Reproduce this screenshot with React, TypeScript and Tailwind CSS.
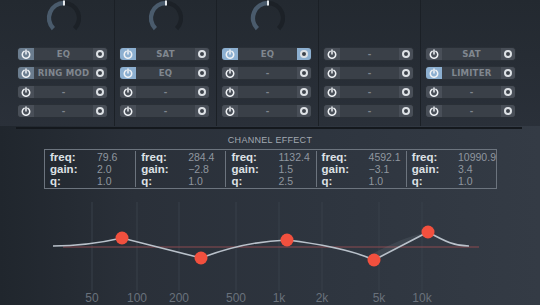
import React from 'react';

type Slot = {
  label: string;
  power?: 'off' | 'dim' | 'on';
  send?: boolean;
};

const columns: { knob: boolean; slots: Slot[] }[] = [
  { knob: true, slots: [{ label: 'EQ', power: 'dim' }, { label: 'RING MOD', power: 'dim' }, { label: '-' }, { label: '-' }] },
  { knob: true, slots: [{ label: 'SAT', power: 'on' }, { label: 'EQ', power: 'on' }, { label: '-' }, { label: '-' }] },
  { knob: true, slots: [{ label: 'EQ', power: 'on', send: true }, { label: '-' }, { label: '-' }, { label: '-' }] },
  { knob: false, slots: [{ label: '-' }, { label: '-' }, { label: '-' }, { label: '-' }] },
  { knob: false, slots: [{ label: 'SAT' }, { label: 'LIMITER', power: 'on' }, { label: '-' }, { label: '-' }] },
];

const bands = [
  { freq: '79.6', gain: '2.0', q: '1.0' },
  { freq: '284.4', gain: '−2.8', q: '1.0' },
  { freq: '1132.4', gain: '1.5', q: '2.5' },
  { freq: '4592.1', gain: '−3.1', q: '1.0' },
  { freq: '10990.9', gain: '3.4', q: '1.0' },
];

const ticks = [
  { label: '50', x: 92 },
  { label: '100', x: 137 },
  { label: '200', x: 179 },
  { label: '500', x: 236 },
  { label: '1k', x: 279 },
  { label: '2k', x: 322 },
  { label: '5k', x: 379 },
  { label: '10k', x: 422 },
];

const nodes = [
  [122, 43],
  [201, 63],
  [287, 45],
  [374, 65],
  [428, 37],
];

function Knob() {
  return (
    <svg width="36" height="36" viewBox="0 0 36 36">
      <path d="M7.4 28.6 A15 15 0 0 1 18 3" fill="none" stroke="#4a5b6c" strokeWidth="4.5" />
      <path d="M18 3 A15 15 0 0 1 28.6 28.6" fill="none" stroke="#1c2127" strokeWidth="4.5" />
      <rect x="17" y="0.5" width="2" height="5" fill="#e6e9ec" />
    </svg>
  );
}

function PowerIcon() {
  return (
    <svg width="10" height="10" viewBox="0 0 10 10">
      <path d="M3.1 2.4 A3.7 3.7 0 1 0 6.9 2.4" fill="none" stroke="#eef1f4" strokeWidth="1.5" strokeLinecap="round" />
      <line x1="5" y1="1" x2="5" y2="5" stroke="#eef1f4" strokeWidth="1.5" strokeLinecap="round" />
    </svg>
  );
}

function SlotRow({ slot }: { slot: Slot }) {
  const powerBg =
    slot.power === 'on' ? 'bg-[#8cafd0]' : slot.power === 'dim' ? 'bg-[#6b7d8f]' : 'bg-[#494f58]';
  const sendBg = slot.send ? 'bg-[#8cafd0]' : 'bg-[#484e57]';
  return (
    <div className="flex h-[14px] w-[91px] overflow-hidden rounded-[4px] border border-[#2a3037] bg-[#3a4048]">
      <div className={`flex w-[16px] items-center justify-center ${powerBg}`}>
        <PowerIcon />
      </div>
      <div
        className="flex flex-1 items-center justify-center whitespace-nowrap text-[9.5px] font-bold leading-none tracking-[0.2px] text-[#80878f]"
        style={{ fontFamily: '"DejaVu Sans Condensed", "DejaVu Sans", sans-serif' }}
      >
        {slot.label}
      </div>
      <div className={`flex w-[14px] items-center justify-center ${sendBg}`}>
        <div className="h-[8px] w-[8px] rounded-full border-2 border-[#dde1e5] bg-[#3c424a]" />
      </div>
    </div>
  );
}

export default function App() {
  return (
    <div
      className="relative h-[305px] w-[540px] overflow-hidden bg-[linear-gradient(90deg,#20262d_0%,#2a3039_25%,#2e353f_60%,#343b45_100%)]"
      style={{ fontFamily: '"Liberation Sans", Arial, sans-serif' }}
    >
      {/* plugin chain */}
      <div className="flex h-[126px] bg-[linear-gradient(180deg,#232930_0%,#2a3039_100%)] pl-[13px]">
        {columns.map((col, i) => (
          <div
            key={i}
            className={`flex w-[102px] flex-col ${i < 4 ? 'border-r border-[#1b2026]' : ''}`}
          >
            <div className="flex h-[47px] justify-center">{col.knob && <Knob />}</div>
            <div className="flex flex-col gap-[5px] pl-[4px]">
              {col.slots.map((s, j) => (
                <SlotRow key={j} slot={s} />
              ))}
            </div>
          </div>
        ))}
      </div>
      <div className="ml-[16px] mt-[1px] h-[2px] w-[506px] bg-[#14181d]" />

      {/* channel effect */}
      <div className="mt-[6px] text-center text-[9px] leading-[10px] tracking-[0.3px] text-[#a3a9b1]">
        CHANNEL EFFECT
      </div>
      <div className="ml-[44px] mt-[4px] grid h-[40px] w-[453px] grid-cols-5 border border-[#6c747e]">
        {bands.map((b, i) => (
          <div key={i} className={`my-[1px] flex ${i > 0 ? 'border-l border-[#6c747e]' : ''}`}>
            <div className="w-[52px] pl-[5px] text-[11.5px] font-bold leading-[12px] text-[#dde1e5]">
              <div>freq:</div>
              <div>gain:</div>
              <div>q:</div>
            </div>
            <div className="whitespace-nowrap text-[10.5px] leading-[12px] text-[#8f969f]">
              <div>{b.freq}</div>
              <div>{b.gain}</div>
              <div>{b.q}</div>
            </div>
          </div>
        ))}
      </div>

      {/* eq curve */}
      <svg className="mt-[6px] block" width="540" height="110" viewBox="0 0 540 110">
        {ticks.map((t) => (
          <line key={t.label} x1={t.x} y1="7" x2={t.x} y2="96" stroke="#38404a" strokeWidth="1" />
        ))}
        <line x1="63" y1="52" x2="479" y2="52" stroke="#8c4a50" strokeWidth="1.2" />
        <path d="M374 65 L428 37 C400 44 390 50 374 58 Z" fill="#8e98a4" opacity="0.15" />
        <path
          d="M53 51 C80 51 100 48 122 43 L201 63 C230 52 258 46 287 45 C320 49 350 54 374 65 L428 37 C446 47 455 51 469 51"
          fill="none"
          stroke="#b9c1ca"
          strokeWidth="1.6"
        />
        {nodes.map(([x, y], i) => (
          <circle key={i} cx={x} cy={y} r="6.5" fill="#f2503e" />
        ))}
        {ticks.map((t) => (
          <text
            key={t.label}
            x={t.x}
            y="107"
            textAnchor="middle"
            fontSize="12"
            fill="#69717b"
            fontFamily='"Liberation Sans", Arial, sans-serif'
          >
            {t.label}
          </text>
        ))}
      </svg>
    </div>
  );
}
